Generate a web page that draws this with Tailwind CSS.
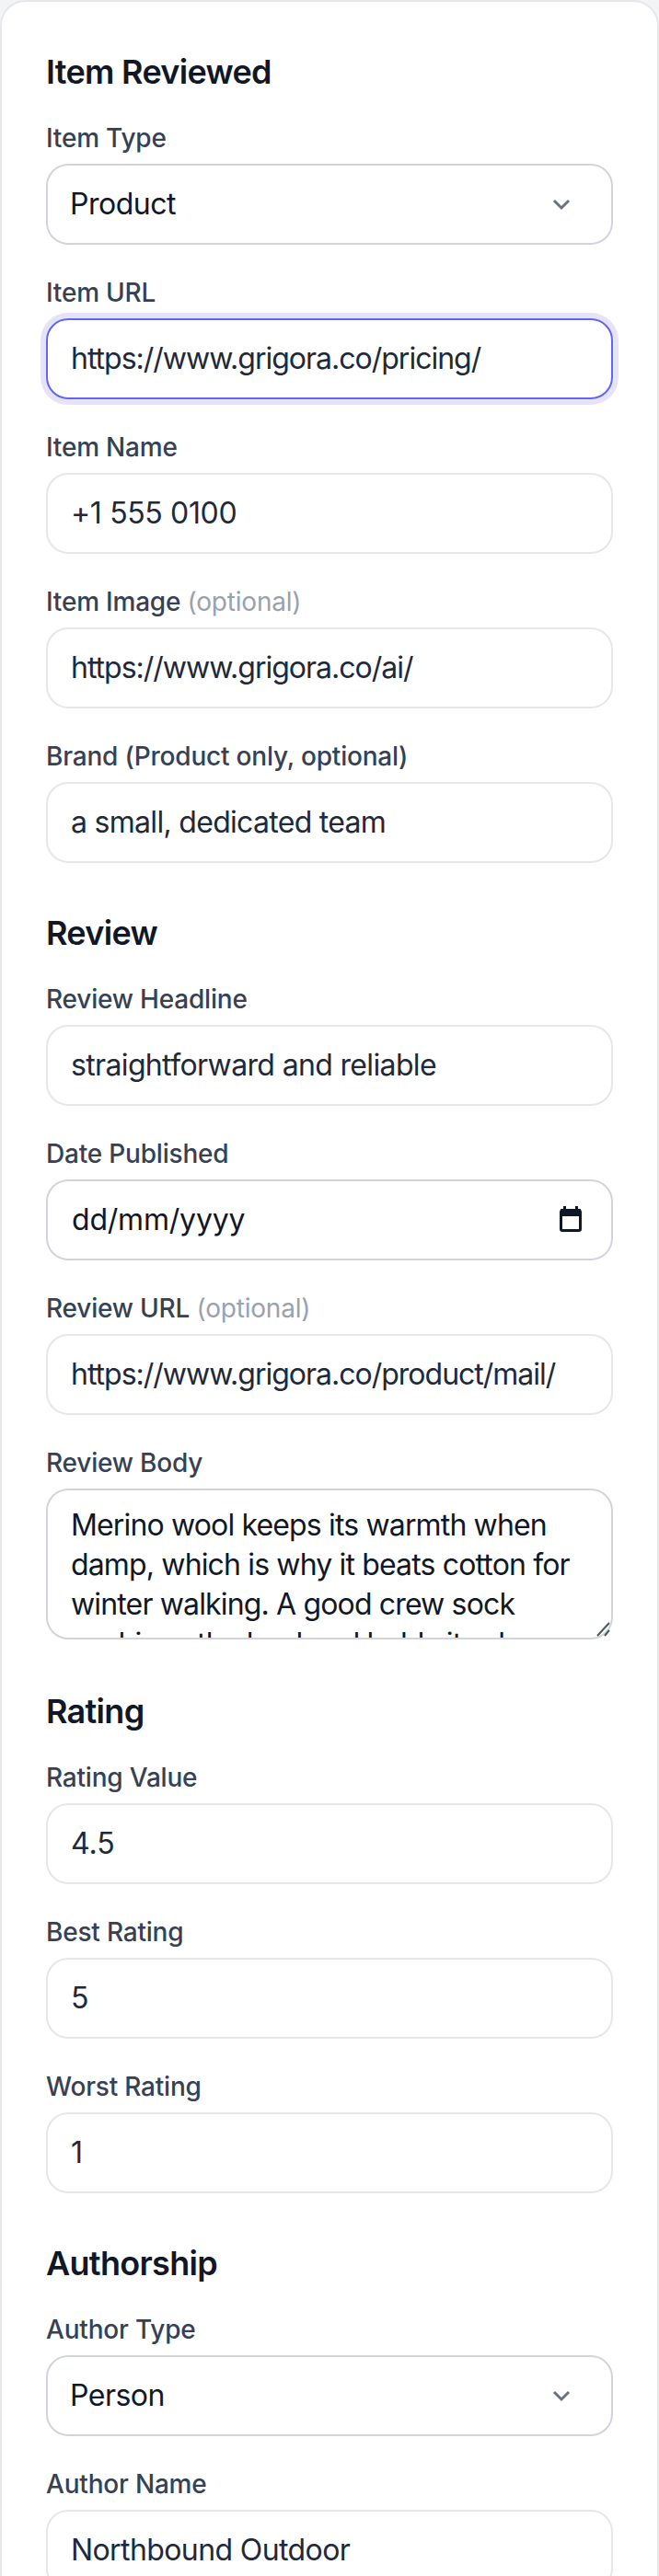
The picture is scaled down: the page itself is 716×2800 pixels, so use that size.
<!DOCTYPE html>
<html lang="en">
<head>
    <meta charset="UTF-8">
    <title>Review Schema Generator</title>
    <script src="https://cdn.jsdelivr.net/npm/@tailwindcss/browser@4"></script>
</head>
<body class="h-[2800px] overflow-hidden bg-[#f3f4f6] font-['Inter',sans-serif]">
<form class="bg-white border-2 border-[#e5e7eb] rounded-[28px] px-12 py-12">

    <!-- Item Reviewed -->
    <h2 class="text-[36px] leading-[56px] font-semibold tracking-[-0.7px] text-gray-900 mb-6">Item Reviewed</h2>
    <div class="flex flex-col gap-8">
        <div>
            <label class="block text-[28px] leading-10 font-medium tracking-[-0.2px] text-gray-700 mb-2">Item Type</label>
            <div class="relative">
                <select class="block w-full h-[88px] appearance-none bg-white border-2 border-[#d1d5db] rounded-3xl px-[24px] text-[32px] tracking-[-0.5px] text-gray-900 outline-none">
                    <option>Product</option>
                </select>
                <svg class="absolute right-[46px] top-[34px] w-5 h-5 text-gray-500" viewBox="0 0 20 20" fill="none" stroke="currentColor" stroke-width="3"><path d="M2 6l8 8 8-8"/></svg>
            </div>
        </div>
        <div>
            <label class="block text-[28px] leading-10 font-medium tracking-[-0.2px] text-gray-700 mb-2">Item URL</label>
            <input type="text" value="https://www.grigora.co/pricing/" class="block w-full h-[88px] bg-white border-2 border-[#6366f1] rounded-3xl px-[25px] pb-[2px] text-[32px] tracking-[-1px] text-gray-800 outline-none ring-[6px] ring-[#e6e3f8]">
        </div>
        <div>
            <label class="block text-[28px] leading-10 font-medium tracking-[-0.2px] text-gray-700 mb-2">Item Name</label>
            <input type="text" value="+1 555 0100" class="block w-full h-[88px] bg-white border-2 border-[#e5e7eb] rounded-3xl px-[25px] pb-[2px] text-[32px] tracking-[-0.35px] text-gray-800 outline-none">
        </div>
        <div>
            <label class="block text-[28px] leading-10 font-medium tracking-[-0.2px] text-gray-700 mb-2">Item Image <span class="font-normal text-gray-400">(optional)</span></label>
            <input type="text" value="https://www.grigora.co/ai/" class="block w-full h-[88px] bg-white border-2 border-[#e5e7eb] rounded-3xl px-[25px] pb-[2px] text-[32px] tracking-[-1px] text-gray-800 outline-none">
        </div>
        <div>
            <label class="block text-[28px] leading-10 font-medium tracking-[-0.2px] text-gray-700 mb-2">Brand (Product only, optional)</label>
            <input type="text" value="a small, dedicated team" class="block w-full h-[88px] bg-white border-2 border-[#e5e7eb] rounded-3xl px-[25px] pb-[2px] text-[32px] tracking-[-0.7px] text-gray-800 outline-none">
        </div>
    </div>

    <!-- Review -->
    <h2 class="text-[36px] leading-[56px] font-semibold tracking-[-0.7px] text-gray-900 mt-12 mb-6">Review</h2>
    <div class="flex flex-col gap-8">
        <div>
            <label class="block text-[28px] leading-10 font-medium tracking-[-0.2px] text-gray-700 mb-2">Review Headline</label>
            <input type="text" value="straightforward and reliable" class="block w-full h-[88px] bg-white border-2 border-[#e5e7eb] rounded-3xl px-[25px] pb-[2px] text-[32px] tracking-[-0.65px] text-gray-800 outline-none">
        </div>
        <div>
            <label class="block text-[28px] leading-10 font-medium tracking-[-0.2px] text-gray-700 mb-2">Date Published</label>
            <div class="relative">
                <div class="flex items-center w-full h-[88px] bg-white border-2 border-[#d1d5db] rounded-3xl px-[26px] text-[32px] tracking-[-0.2px] text-gray-900">dd/mm/yyyy</div>
                <svg class="absolute right-[34px] top-[29px] w-6 h-7 text-gray-900" viewBox="0 0 24 28" fill="currentColor"><rect x="1.500" y="5" width="21" height="21.500" rx="1.500" fill="none" stroke="currentColor" stroke-width="3"/><path d="M1 3h22v8H1zM4 0h3v4H4zM17 0h3v4h-3z"/></svg>
            </div>
        </div>
        <div>
            <label class="block text-[28px] leading-10 font-medium tracking-[-0.2px] text-gray-700 mb-2">Review URL <span class="font-normal text-gray-400">(optional)</span></label>
            <input type="text" value="https://www.grigora.co/product/mail/" class="block w-full h-[88px] bg-white border-2 border-[#e5e7eb] rounded-3xl px-[25px] pb-[2px] text-[32px] tracking-[-1px] text-gray-800 outline-none">
        </div>
        <div>
            <label class="block text-[28px] leading-10 font-medium tracking-[-0.2px] text-gray-700 mb-2">Review Body</label>
            <div class="relative mb-[2px]">
                <textarea class="block w-full h-[164px] bg-white border-2 border-[#d1d5db] rounded-3xl px-[25px] pt-4 text-[32px] leading-[43px] tracking-[-0.85px] text-gray-900 outline-none resize-none overflow-hidden">Merino wool keeps its warmth when damp, which is why it beats cotton for winter walking. A good crew sock cushions the heel and holds its shape after many washes.</textarea>
                <svg class="absolute right-[2px] bottom-[3px] w-4 h-4 text-gray-600" viewBox="0 0 16 16" fill="none" stroke="currentColor" stroke-width="2"><path d="M1 15L14 1M9 15l5-6"/></svg>
            </div>
        </div>
    </div>

    <!-- Rating -->
    <h2 class="text-[36px] leading-[56px] font-semibold tracking-[-0.7px] text-gray-900 mt-12 mb-6">Rating</h2>
    <div class="flex flex-col gap-8">
        <div>
            <label class="block text-[28px] leading-10 font-medium tracking-[-0.2px] text-gray-700 mb-2">Rating Value</label>
            <input type="text" value="4.5" class="block w-full h-[88px] bg-white border-2 border-[#e5e7eb] rounded-3xl px-[25px] pb-[2px] text-[32px] text-gray-800 outline-none">
        </div>
        <div>
            <label class="block text-[28px] leading-10 font-medium tracking-[-0.2px] text-gray-700 mb-2">Best Rating</label>
            <input type="text" value="5" class="block w-full h-[88px] bg-white border-2 border-[#e5e7eb] rounded-3xl px-[25px] pb-[2px] text-[32px] text-gray-800 outline-none">
        </div>
        <div>
            <label class="block text-[28px] leading-10 font-medium tracking-[-0.2px] text-gray-700 mb-2">Worst Rating</label>
            <input type="text" value="1" class="block w-full h-[88px] bg-white border-2 border-[#e5e7eb] rounded-3xl px-[25px] pb-[2px] text-[32px] text-gray-800 outline-none">
        </div>
    </div>

    <!-- Authorship -->
    <h2 class="text-[36px] leading-[56px] font-semibold tracking-[-0.7px] text-gray-900 mt-12 mb-6">Authorship</h2>
    <div class="flex flex-col gap-8">
        <div>
            <label class="block text-[28px] leading-10 font-medium tracking-[-0.2px] text-gray-700 mb-2">Author Type</label>
            <div class="relative">
                <select class="block w-full h-[88px] appearance-none bg-white border-2 border-[#d1d5db] rounded-3xl px-[24px] text-[32px] tracking-[-0.5px] text-gray-900 outline-none">
                    <option>Person</option>
                </select>
                <svg class="absolute right-[46px] top-[34px] w-5 h-5 text-gray-500" viewBox="0 0 20 20" fill="none" stroke="currentColor" stroke-width="3"><path d="M2 6l8 8 8-8"/></svg>
            </div>
        </div>
        <div>
            <label class="block text-[28px] leading-10 font-medium tracking-[-0.2px] text-gray-700 mb-2">Author Name</label>
            <input type="text" value="Northbound Outdoor" class="block w-full h-[88px] bg-white border-2 border-[#e5e7eb] rounded-3xl px-[25px] pb-[2px] text-[32px] tracking-[-0.6px] text-gray-800 outline-none">
        </div>
    </div>
</form>
</body>
</html>
